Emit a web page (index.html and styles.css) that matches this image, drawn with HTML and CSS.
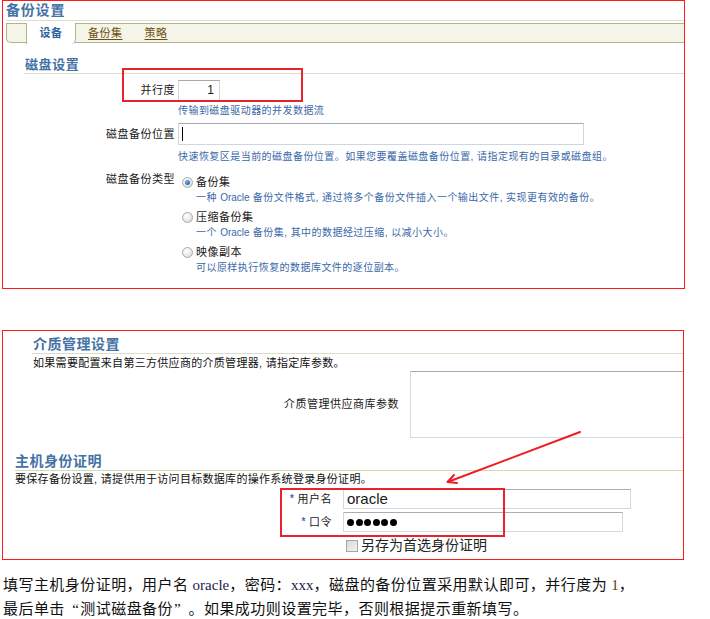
FILE: index.html
```html
<!DOCTYPE html>
<html lang="zh-CN">
<head>
<meta charset="utf-8">
<title>备份设置</title>
<link rel="stylesheet" href="styles.css">
</head>
<body>
<div class="page">
  <section class="shot shot1">
    <h1 class="title">备份设置</h1>
    <div class="tabs">
      <div class="tabband">
        <span class="tab active">设备</span>
        <span class="tab link t2">备份集</span>
        <span class="tab link t3">策略</span>
      </div>
    </div>
    <h2 class="shead">磁盘设置</h2>
    <div class="form1">
      <div class="frow r1">
        <div class="flabel tall21">并行度</div>
        <div class="fcell">
          <div class="inp small">1</div>
          <div class="help h1">传输到磁盘驱动器的并发数据流</div>
        </div>
      </div>
      <div class="frow r2">
        <div class="flabel tall22">磁盘备份位置</div>
        <div class="fcell">
          <div class="inp wide"><span class="caret"></span></div>
          <div class="help h2">快速恢复区是当前的磁盘备份位置。如果您要覆盖磁盘备份位置, 请指定现有的目录或磁盘组。</div>
        </div>
      </div>
      <div class="frow r3">
        <div class="flabel">磁盘备份类型</div>
        <div class="fcell opts">
          <div class="opt">
            <span class="radio on"></span>
            <span class="optlabel">备份集</span>
            <span class="optdesc">一种 <span class="lat">Oracle</span> 备份文件格式, 通过将多个备份文件插入一个输出文件, 实现更有效的备份。</span>
          </div>
          <div class="opt">
            <span class="radio"></span>
            <span class="optlabel">压缩备份集</span>
            <span class="optdesc">一个 <span class="lat">Oracle</span> 备份集, 其中的数据经过压缩, 以减小大小。</span>
          </div>
          <div class="opt">
            <span class="radio"></span>
            <span class="optlabel">映像副本</span>
            <span class="optdesc">可以原样执行恢复的数据库文件的逐位副本。</span>
          </div>
        </div>
      </div>
    </div>
  </section>

  <section class="shot shot2">
    <h2 class="shead2">介质管理设置</h2>
    <p class="desc2">如果需要配置来自第三方供应商的介质管理器, 请指定库参数。</p>
    <div class="mmrow">
      <div class="flabel">介质管理供应商库参数</div>
      <div class="textarea"></div>
    </div>
    <h2 class="shead3">主机身份证明</h2>
    <p class="desc3">要保存备份设置, 请提供用于访问目标数据库的操作系统登录身份证明。</p>
    <div class="cred">
      <div class="flabel clabel"><span class="req">*</span>用户名</div>
      <div class="cinp user">oracle</div>
      <div class="flabel clabel"><span class="req">*</span>口令</div>
      <div class="cinp pass"><span class="dot"></span><span class="dot"></span><span class="dot"></span><span class="dot"></span><span class="dot"></span><span class="dot"></span></div>
      <div class="spacer"></div>
      <div class="chkrow"><span class="chk"></span><span class="chktext">另存为首选身份证明</span></div>
    </div>
  </section>

  <p class="note">填写主机身份证明，用户名 <span class="latn">oracle</span>，密码：<span class="latn">xxx</span>，磁盘的备份位置采用默认即可，并行度为 <span class="latn num">1</span>，<br>最后单击<span class="q open">“</span>测试磁盘备份<span class="q close">”</span>。如果成功则设置完毕，否则根据提示重新填写。</p>

  <div class="hl hl1"></div>
  <div class="hl hl2"></div>
  <svg class="arrow" width="710" height="619" viewBox="0 0 710 619">
    <line x1="580" y1="432" x2="449" y2="481.5" stroke="#ee1c24" stroke-width="2" stroke-linecap="round"/>
    <polyline points="454,475 447.5,482 457,483" fill="none" stroke="#ee1c24" stroke-width="2" stroke-linecap="round" stroke-linejoin="round"/>
  </svg>
</div>
</body>
</html>
```

FILE: styles.css
```css
* { box-sizing: border-box; }
html, body { margin: 0; padding: 0; background: #fff; }
body {
  font-family: "Liberation Sans", "Noto Sans CJK SC", sans-serif;
  color: #1a1a1a;
}
.page { position: relative; width: 710px; }

.shot { border: 1px solid #ff1a1a; margin-left: 2px; }
.shot1 { width: 683px; height: 289px; }
.shot2 { width: 682px; height: 230px; margin-top: 41px; overflow: hidden; }

.title {
  margin: 0; padding-left: 3px;
  font-size: 14px; line-height: 19px; font-weight: bold;
  color: #4372a6; letter-spacing: 0.8px;
}

.tabs { margin-left: 3px; border-top: 1px solid #dedfcb; padding-top: 2px; }
.tabband {
  display: flex; height: 20px;
  background: #f5f5e7;
  border: 1px solid #b1b392; border-right: none;
  border-bottom-left-radius: 5px;
}
.tab { font-size: 11px; line-height: 18px; letter-spacing: 0.5px; }
.tab.active {
  width: 50px; margin: -1px 0 -2px 19px; padding-top: 1px;
  text-align: center; background: #fff;
  border-left: 1px solid #b1b392; border-right: 1px solid #b1b392;
  border-bottom-right-radius: 5px;
  font-weight: bold; color: #2f62a0;
}
.tab.link { color: #6e4f12; text-decoration: underline; text-underline-offset: 2px; }
.t2 { margin-left: 12px; }
.t3 { margin-left: 22px; }

.shead {
  margin: 14px 0 0 21px; padding-left: 1px;
  font-size: 13px; line-height: 16px; font-weight: bold;
  color: #4372a6; letter-spacing: 0.6px;
  border-bottom: 1px solid #dcdcc8;
}

.form1 { margin-top: 6px; }
.frow { display: grid; grid-template-columns: 172px 1fr; column-gap: 3px; }
.r2 { margin-top: 5px; }
.r3 { margin-top: 8px; }
.flabel {
  text-align: right; font-size: 11px; line-height: 15px;
  letter-spacing: 0.5px; color: #1a1a1a; white-space: nowrap;
}
.tall21 { line-height: 21px; }
.tall22 { line-height: 22px; }

.inp {
  height: 21px; background: #fff;
  border: 1px solid #cfd6df; border-top-color: #a3aab3;
  font-size: 12px; line-height: 19px;
}
.inp.small { width: 42px; text-align: right; padding-right: 5px; }
.inp.wide { width: 406px; height: 22px; padding: 3px 0 0 3px; }
.caret { display: block; width: 1px; height: 14px; background: #000; }

.help {
  font-size: 10px; line-height: 14px; letter-spacing: 0.45px;
  color: #3a69a8; white-space: nowrap;
}
.h1 { margin-top: 3px; }
.h2 { margin-top: 5px; }
.lat { font-family: "Liberation Sans", sans-serif; letter-spacing: 0; }

.opts { padding-top: 3px; }
.opt { display: grid; grid-template-columns: 18px 1fr; align-items: center; }
.opt + .opt { margin-top: 5px; }
.radio {
  width: 11px; height: 11px; margin-left: 4px; border-radius: 50%;
  border: 1px solid #a9abae;
  background: radial-gradient(circle at 40% 35%, #ffffff 0%, #e6e7e9 60%, #cfd1d4 100%);
  position: relative;
}
.radio.on::after {
  content: ""; position: absolute; left: 2px; top: 2px;
  width: 5px; height: 5px; border-radius: 50%;
  background: radial-gradient(circle at 40% 35%, #7fb2e6 0%, #2a67ad 70%);
}
.optlabel { font-size: 11px; line-height: 15px; letter-spacing: 0.5px; color: #1a1a1a; }
.optdesc {
  grid-column: 2; font-size: 10px; line-height: 15px; letter-spacing: 0.45px;
  color: #3a69a8; white-space: nowrap;
}

.shead2 {
  margin: 5px 0 0 29px; padding-left: 1px;
  font-size: 14px; line-height: 17px; font-weight: bold;
  color: #4372a6; letter-spacing: 0.5px;
  border-bottom: 1px solid #dcdcc8;
}
.desc2 {
  margin: 2px 0 0 30px; font-size: 11px; line-height: 14px;
  letter-spacing: 0.3px; color: #111;
}
.mmrow {
  display: grid; grid-template-columns: 396px 300px; column-gap: 11px;
  align-items: center; margin-top: 1px;
}
.textarea {
  height: 67px; background: #fff;
  border: 1px solid #d4dae2; border-top-color: #aaaaaa;
}
.shead3 {
  margin: 15px 0 0 12px;
  font-size: 14px; line-height: 17px; font-weight: bold;
  color: #4372a6; letter-spacing: 0.5px;
  border-bottom: 1px solid #d6dab0;
}
.desc3 {
  margin: 1px 0 0 12px; font-size: 11px; line-height: 14px;
  letter-spacing: 0.3px; color: #111; white-space: nowrap;
}

.cred {
  display: grid; grid-template-columns: 329px 288px; column-gap: 11px;
  row-gap: 3px; margin-top: 3px; align-items: center;
}
.clabel { line-height: 20px; }
.req { color: #3a6fb8; font-size: 10px; font-weight: bold; margin-right: 3px; vertical-align: 1px; }
.cinp {
  height: 20px; background: #fff;
  border: 1px solid #d2d8e0; border-top-color: #adadad;
}
.user {
  font-family: "Liberation Sans", sans-serif; font-size: 15px; line-height: 18px;
  padding-left: 3px; color: #1a1a1a;
}
.pass { width: 280px; display: flex; align-items: center; gap: 1.6px; padding-left: 3px; }
.dot { width: 7px; height: 7px; border-radius: 50%; background: #000; }
.spacer { height: 15px; }
.chkrow { display: flex; align-items: center; margin-top: 3px; }
.chk {
  width: 12px; height: 12px; margin-left: 3px; margin-right: 3px;
  border: 1px solid #a6a6a6;
  background: linear-gradient(135deg, #d8d8d8, #f4f4f4);
}
.chktext { font-size: 14px; line-height: 15px; color: #222; }

.note {
  margin: 13px 0 0; padding-left: 3px;
  font-family: "Liberation Serif", "Noto Sans CJK SC", serif;
  font-size: 15px; line-height: 24px; color: #111; white-space: nowrap;
  letter-spacing: 0.45px;
}
.q { display: inline-block; width: 15.5px; }
.q.open { text-align: right; padding-right: 1px; }
.q.close { text-align: left; padding-left: 1px; }
.latn { font-family: "Liberation Serif", serif; color: #1b1b4a; letter-spacing: 0; }
.num { color: #5a3a10; }

.hl { position: absolute; border: 2px solid #e8232b; pointer-events: none; }
.hl1 { left: 122px; top: 68px; width: 181px; height: 34px; }
.hl2 { left: 280px; top: 488px; width: 225px; height: 49px; }
.arrow { position: absolute; left: 0; top: 0; pointer-events: none; }
```
